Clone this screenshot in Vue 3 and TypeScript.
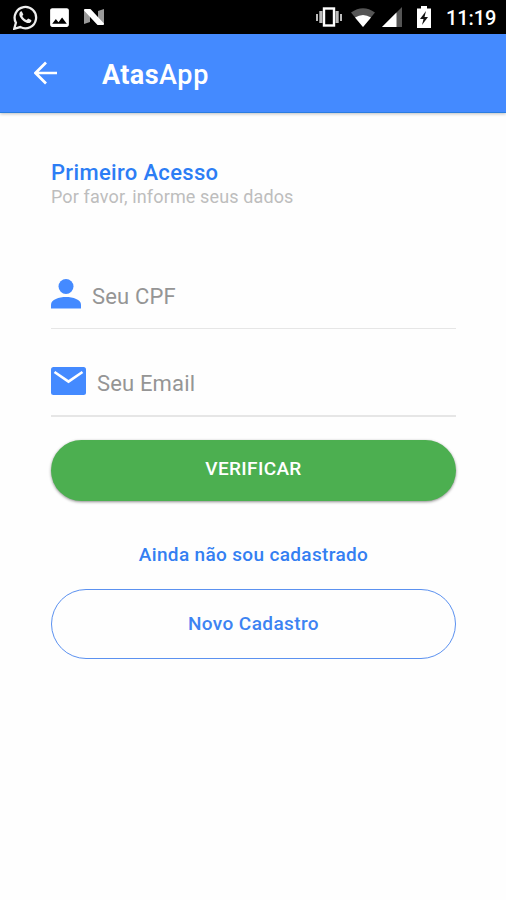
<script setup lang="ts">
import { ref } from 'vue'

const cpf = ref<string>('')
const email = ref<string>('')
</script>

<template>
  <div class="screen">
    <div class="status">
      <svg class="whatsapp" viewBox="0 0 24 24" width="25" height="25">
        <path d="M1.2 22.8 2.8 17A10.3 10.3 0 1 1 7 21.2Z" fill="none" stroke="#eee" stroke-width="2.200" />
        <path d="M8.5 6.3c-.5-.5-1-.4-1.5.2-2.1 2.5-.3 5.500 2.300 8.100 2.700 2.500 5.800 3.700 7.600 2 .8-.8.9-1.800.6-2.200l-2.500-1.300c-.7-.3-1 .9-1.800 1.300-1.700-.4-3.700-2.300-4.300-3.900.4-.6 1.200-1 .9-1.700z" fill="#eee" />
      </svg>
      <svg class="photo" viewBox="0 0 24 24" width="25" height="25">
        <path fill="#fff" d="M21 19V5c0-1.100-.9-2-2-2H5c-1.100 0-2 .9-2 2v14c0 1.100.9 2 2 2h14c1.100 0 2-.9 2-2zM8.500 13.500l2.500 3.010L14.500 12l4.500 6H5l3.500-4.500z" />
      </svg>
      <svg class="nougat" viewBox="0 0 22 18" width="22" height="18">
        <path d="M1 2h6v12l-6 2zM15 3l6-2v15h-6z" fill="#999" />
        <path d="M2 2h5l13 14h-5z" fill="#fff" stroke="#fff" stroke-width="2" stroke-linejoin="round" />
      </svg>
      <div class="grow"></div>
      <svg class="vibrate" viewBox="0 0 26 22" width="26" height="22">
        <path d="M0 8h2v7H0zM3.300 5H6.500v12H3.300zM19.500 5h3.200v12h-3.200zM24 8h2v7h-2z" fill="#bbb" />
        <rect x="8" y="2.500" width="10" height="17" fill="none" stroke="#fff" stroke-width="2.400" />
      </svg>
      <svg class="wifi" viewBox="0 0 24 19" width="24" height="19">
        <path d="M0 4.500Q12-4 24 4.500L12 19Z" fill="#555" />
        <path d="M4 9.500Q12 4.500 20 9.500L12 19Z" fill="#fff" />
      </svg>
      <svg class="signal" viewBox="0 0 20 20" width="20" height="20">
        <path d="M0 20 20 0V20Z" fill="#555" />
        <path d="M0 20 14.500 5.500V20Z" fill="#fff" />
      </svg>
      <svg class="battery" viewBox="0 0 14 22" width="14" height="22">
        <path d="M4 0h6v2.500h4V22H0V2.500h4z" fill="#fff" />
        <path d="m9 5-6 8h3.500L5 19l6-8H7.500z" fill="#111" />
      </svg>
      <span class="clock">11:19</span>
    </div>

    <header class="bar">
      <button class="back" aria-label="Voltar">
        <svg viewBox="0 0 24 24" width="24" height="24">
          <path d="M23 12H2M12 1.500 1.500 12 12 22.500" fill="none" stroke="#fff" stroke-width="2.700" />
        </svg>
      </button>
      <h1 class="brand">Atas<span>App</span></h1>
    </header>

    <main class="content">
      <h2 class="title">Primeiro Acesso</h2>
      <p class="subtitle">Por favor, informe seus dados</p>

      <label class="field cpf">
        <svg viewBox="0 0 30 30" width="30" height="30">
          <circle cx="15" cy="7.500" r="7.500" fill="#448aff" />
          <path d="M0 29.500v-4c0-5 8-7.500 15-7.500s15 2.500 15 7.500v4z" fill="#448aff" />
        </svg>
        <span class="hint">Seu CPF</span>
        <input v-model="cpf" type="text" />
      </label>

      <label class="field email">
        <svg viewBox="0 0 35 28" width="35" height="28">
          <rect width="35" height="28" rx="2.500" fill="#448aff" />
          <path d="M3.500 5 17.500 14.500 31.500 5" fill="none" stroke="#fff" stroke-width="2.700" />
        </svg>
        <span class="hint">Seu Email</span>
        <input v-model="email" type="email" />
      </label>

      <button class="verify"><span>VERIFICAR</span></button>
      <p class="question"><span>Ainda não sou cadastrado</span></p>
      <button class="signup"><span>Novo Cadastro</span></button>
    </main>
  </div>
</template>

<style>
body {
  margin: 0;
  background: #fefefe;
}
</style>

<style scoped>
.screen {
  min-height: 900px;
  background: #fefefe;
  font-family: Roboto, "Liberation Sans", sans-serif;
  display: flex;
  flex-direction: column;
}
svg {
  display: block;
  flex: none;
}
h1, h2, p {
  margin: 0;
  white-space: nowrap;
}
button {
  font-family: inherit;
  padding: 0;
  border: 0;
  background: none;
}
.status {
  height: 34px;
  box-sizing: border-box;
  padding: 0 10px 0 13px;
  display: flex;
  align-items: center;
  background: #000;
}
.photo { margin-left: 9px; }
.nougat { margin-left: 11px; }
.grow { flex: 1; }
.wifi { margin-left: 9px; }
.signal { margin-left: 7px; }
.battery { margin-left: 15px; }
.clock {
  width: 50px;
  margin-left: 15px;
  color: #fff;
  font-size: 20px;
  line-height: 37px;
  padding-top: 2px;
  font-weight: 500;
  letter-spacing: -0.1px;
  white-space: nowrap;
}
.bar {
  height: 78px;
  padding-left: 34px;
  display: flex;
  align-items: center;
  background: #448aff;
  border-bottom: 1px solid #2b7de0;
  box-shadow: 0 1px 3px rgba(0, 0, 0, 0.25);
}
.brand {
  margin: 3px 0 0 44px;
  color: #fff;
  font-size: 27px;
  line-height: 32px;
  font-weight: 700;
  letter-spacing: 0.4px;
}
.brand span {
  font-weight: 500;
  letter-spacing: 0.7px;
}
.content {
  padding: 46px 50px 0 51px;
  display: flex;
  flex-direction: column;
}
.title {
  color: #2c7df5;
  font-size: 22px;
  line-height: 28px;
  font-weight: 500;
  letter-spacing: 0.33px;
}
.subtitle {
  color: #bdbdbd;
  font-size: 18px;
  line-height: 20px;
  letter-spacing: 0.13px;
}
.field {
  display: flex;
  box-sizing: border-box;
  align-items: flex-start;
  border-bottom: 2px solid #e6e6e6;
}
.cpf {
  height: 50px;
  margin-top: 72px;
  border-bottom-width: 1px;
}
.email {
  height: 50px;
  margin-top: 38px;
}
.hint {
  color: #959595;
  font-size: 22px;
  line-height: 26px;
  letter-spacing: 0.15px;
  white-space: nowrap;
}
.cpf .hint { margin: 5px 0 0 11px; }
.email .hint { margin: 4px 0 0 11px; }
.field input {
  flex: 1;
  min-width: 0;
  height: 30px;
  padding: 0;
  border: 0;
  outline: 0;
  background: transparent;
  font: inherit;
  font-size: 22px;
}
.verify {
  height: 61px;
  margin-top: 23px;
  border-radius: 31px;
  background: #4caf50;
  color: #fff;
  font-size: 19px;
  line-height: 56px;
  padding-bottom: 4px;
  font-weight: 500;
  letter-spacing: 0.35px;
  box-shadow: 0 1px 3px rgba(0, 0, 0, 0.45);
}
.question {
  margin-top: 42px;
  color: #347ff2;
  font-size: 19px;
  line-height: 24px;
  font-weight: 500;
  letter-spacing: 0.34px;
  text-align: center;
}
.signup {
  height: 70px;
  margin-top: 22px;
  padding-bottom: 1px;
  border: 1px solid #5b91f0;
  border-radius: 35px;
  color: #3d83f2;
  font-size: 19px;
  line-height: 66px;
  font-weight: 500;
  letter-spacing: 0.4px;
}
</style>
